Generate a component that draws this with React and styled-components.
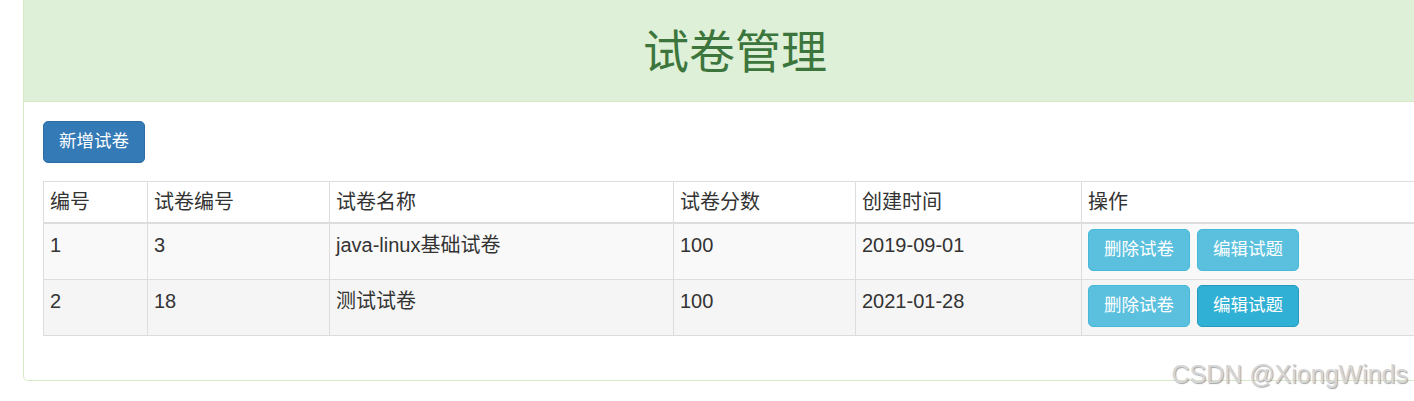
import React from "react";
import styled, { createGlobalStyle } from "styled-components";

const Global = createGlobalStyle`
  html, body { margin: 0; padding: 0; overflow: hidden; background: #fff; }
  body { font-family: "Liberation Sans", "Noto Sans CJK SC", sans-serif; font-size: 17.5px; color: #333; }
`;

const Page = styled.div`
  position: relative;
  width: 1414px;
  height: 401px;
  overflow: hidden;
  padding-left: 23px;
  box-sizing: border-box;
`;

const Panel = styled.div`
  width: 1424px;
  border: 1px solid #d6e9c6;
  border-top: none;
  border-radius: 0 0 5px 5px;
  background: #fff;
  box-sizing: border-box;
`;

const Heading = styled.div`
  height: 102px;
  background: #dff0d8;
  border-bottom: 1px solid #d6e9c6;
  display: flex;
  align-items: center;
  justify-content: center;
  box-sizing: border-box;
`;

const Title = styled.h1`
  margin: 0;
  font-size: 46px;
  font-weight: 400;
  color: #3c763d;
  line-height: 1.1;
  padding-top: 4px;
`;

const Body = styled.div`
  padding: 19px 19px 19px 19px;
`;

const Btn = styled.button`
  display: inline-flex;
  align-items: center;
  justify-content: center;
  height: 42px;
  padding: 0 15px;
  font-family: inherit;
  font-size: 17.5px;
  line-height: 1;
  border-radius: 5px;
  border: 1px solid ${(p) => (p.$variant === "primary" ? "#2e6da4" : p.$hover ? "#269abc" : "#46b8da")};
  background: ${(p) => (p.$variant === "primary" ? "#337ab7" : p.$hover ? "#31b0d5" : "#5bc0de")};
  color: #fff;
  cursor: pointer;
  box-sizing: border-box;
`;

const Toolbar = styled.div`
  display: flex;
  margin-bottom: 18px;
`;

const Table = styled.table`
  width: 100%;
  table-layout: fixed;
  border-collapse: collapse;
  border: 1px solid #ddd;
  margin-bottom: 25px;
  font-size: 20px;
`;

const Th = styled.th`
  text-align: left;
  font-weight: 400;
  padding: 6px 6px 6px;
  line-height: 28px;
  height: 28px;
  border: 1px solid #ddd;
  border-bottom: 2px solid #ddd;
  vertical-align: bottom;
  white-space: nowrap;
`;

const Row = styled.tr`
  background: ${(p) => (p.$hover ? "#f5f5f5" : "#f9f9f9")};
`;

const Td = styled.td`
  padding: ${(p) => (p.$actions ? "5px 6px 8px" : "7px 6px")};
  line-height: 28px;
  border: 1px solid #ddd;
  vertical-align: top;
  white-space: nowrap;
`;

const Actions = styled.div`
  display: flex;
  gap: 7px;
`;

const Watermark = styled.div`
  position: absolute;
  right: 6px;
  top: 360px;
  font-family: "Liberation Sans", sans-serif;
  font-size: 25px;
  line-height: normal;
  color: #d6d6d6;
  text-shadow: 1px 1px 1px rgba(0, 0, 0, 0.35);
  pointer-events: none;
`;

const rows = [
  { id: 1, no: "3", name: "java-linux基础试卷", score: "100", date: "2019-09-01" },
  { id: 2, no: "18", name: "测试试卷", score: "100", date: "2021-01-28", hover: true },
];

const widths = [104, 182, 344, 182, 226];

export default function App() {
  return (
    <Page>
      <Global />
      <Panel>
        <Heading>
          <Title>试卷管理</Title>
        </Heading>
        <Body>
          <Toolbar>
            <Btn $variant="primary">新增试卷</Btn>
          </Toolbar>
          <Table>
            <colgroup>
              {widths.map((w, i) => (
                <col key={i} style={{ width: w }} />
              ))}
              <col />
            </colgroup>
            <thead>
              <tr>
                <Th>编号</Th>
                <Th>试卷编号</Th>
                <Th>试卷名称</Th>
                <Th>试卷分数</Th>
                <Th>创建时间</Th>
                <Th>操作</Th>
              </tr>
            </thead>
            <tbody>
              {rows.map((r) => (
                <Row key={r.id} $hover={r.hover}>
                  <Td>{r.id}</Td>
                  <Td>{r.no}</Td>
                  <Td>{r.name}</Td>
                  <Td>{r.score}</Td>
                  <Td>{r.date}</Td>
                  <Td $actions>
                    <Actions>
                      <Btn $variant="info">删除试卷</Btn>
                      <Btn $variant="info" $hover={r.hover}>编辑试题</Btn>
                    </Actions>
                  </Td>
                </Row>
              ))}
            </tbody>
          </Table>
        </Body>
      </Panel>
      <Watermark>CSDN @XiongWinds</Watermark>
    </Page>
  );
}
